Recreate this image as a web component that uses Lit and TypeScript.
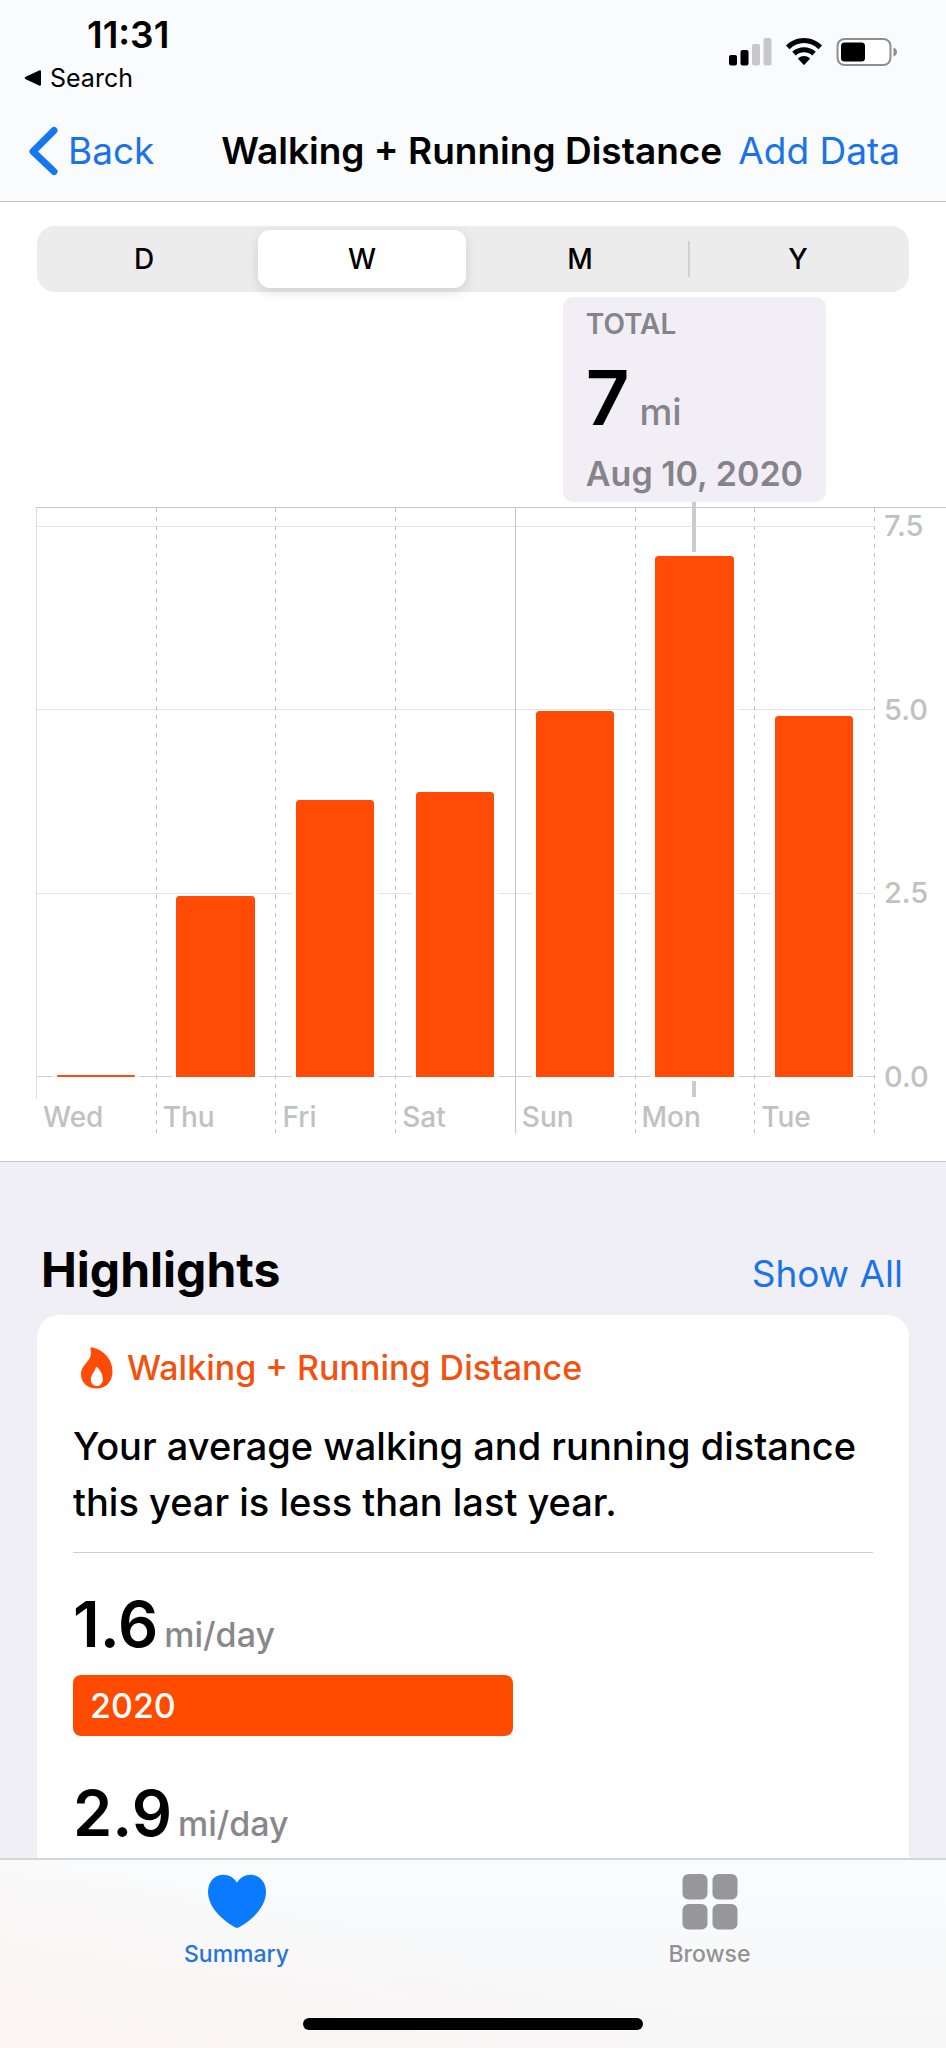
import { LitElement, html, css, svg } from "lit";
import { customElement, property, state } from "lit/decorators.js";
import { classMap } from "lit/directives/class-map.js";

interface DayValue {
  label: string;
  miles: number;
  weekStart?: boolean;
  date?: string;
}

const DAYS: DayValue[] = [
  { label: "Wed", miles: 0.03 },
  { label: "Thu", miles: 2.47 },
  { label: "Fri", miles: 3.77 },
  { label: "Sat", miles: 3.88 },
  { label: "Sun", miles: 4.98, weekStart: true },
  { label: "Mon", miles: 7.1, date: "Aug 10, 2020" },
  { label: "Tue", miles: 4.92 },
];

/* Miles represented by the full height of the plot. */
const CHART_MAX = 7.75;

@customElement("status-bar")
class StatusBar extends LitElement {
  static styles = css`
    :host {
      display: flex;
      justify-content: space-between;
      height: 100px;
      padding: 0 48px 0 24px;
      box-sizing: border-box;
    }
    .left {
      padding-top: 15px;
    }
    .time {
      padding-left: 63px;
      font-size: 37px;
      line-height: 40px;
      font-weight: 600;
    }
    .return {
      display: flex;
      align-items: center;
      gap: 9px;
      margin-top: 7px;
      font-size: 25px;
      line-height: 32px;
      color: #000;
      text-decoration: none;
    }
    .icons {
      display: flex;
      align-items: center;
      gap: 14px;
      height: 103px;
    }
    svg {
      display: block;
    }
  `;

  render() {
    return html`
      <div class="left">
        <div class="time">11:31</div>
        <a class="return" href="#search">
          <svg width="17" height="16" viewBox="0 0 17 16" aria-hidden="true">
            <path d="M1.2 7 15.6.3Q17 0 17 1.4V14.6Q17 16 15.6 15.7L1.2 9Q0 8 1.2 7Z" />
          </svg>
          Search
        </a>
      </div>
      <div class="icons">
        <svg width="43" height="28" viewBox="0 0 43 28" role="img" aria-label="Signal, two of four bars">
          <rect x="0" y="17" width="8" height="10.5" rx="2" />
          <rect x="11.5" y="12" width="8" height="15.5" rx="2" />
          <rect x="23" y="6" width="8" height="21.5" rx="2" fill="#c7c7c9" />
          <rect x="34.5" y="0" width="8" height="27.5" rx="2" fill="#c7c7c9" />
        </svg>
        <svg width="36" height="28" viewBox="0 0 36 28" role="img" aria-label="Wi-Fi">
          <path d="M0 7.6C5 2.7 11.300 0 18 0s13 2.700 18 7.600L32.500 11.200C28.400 7.300 23.300 5.100 18 5.100S7.600 7.300 3.500 11.200Z" />
          <path d="M6.200 13.800C9.500 10.800 13.600 9.200 18 9.200s8.500 1.600 11.800 4.600L26.200 17.400C23.900 15.300 21 14.200 18 14.200s-5.900 1.100-8.200 3.200Z" />
          <path d="M12.400 20.100c1.600-1.300 3.500-2.100 5.600-2.100s4 .8 5.600 2.100c.4.400.4.800 0 1.200L18.600 26.600c-.4.400-.8.400-1.200 0L12.400 21.300c-.4-.4-.4-.8 0-1.200Z" />
        </svg>
        <svg width="62" height="28" viewBox="0 0 62 28" role="img" aria-label="Battery, half full">
          <rect x="1.500" y="1" width="53" height="26" rx="7" fill="#fff" stroke="#8e8e90" stroke-width="2" />
          <rect x="5" y="4.500" width="24" height="19" rx="3.500" />
          <path d="M57.500 9.500c2 .6 3.500 2.200 3.500 4.500s-1.500 3.900-3.500 4.500Z" fill="#8e8e90" />
        </svg>
      </div>
    `;
  }
}

@customElement("nav-bar")
class NavBar extends LitElement {
  static styles = css`
    :host {
      display: flex;
      align-items: center;
      height: 102px;
      padding: 0 46px 0 28px;
      box-sizing: border-box;
      border-bottom: 1px solid #bcbcbe;
      white-space: nowrap;
    }
    .action {
      display: flex;
      align-items: center;
      gap: 10px;
      padding: 0;
      border: 0;
      background: none;
      font: inherit;
      font-size: 37px;
      line-height: 48px;
      color: #1a73e8;
    }
    .title {
      flex: 1;
      margin: 0;
      padding-right: 16px;
      text-align: right;
      font-size: 37px;
      line-height: 48px;
      font-weight: 600;
    }
  `;

  render() {
    return html`
      <button class="action" type="button">
        <svg width="30" height="50" viewBox="0 0 30 50" aria-hidden="true">
          <path d="M26 4.500 5 25.500 26 45.500" fill="none" stroke="#1478f2" stroke-width="7" stroke-linecap="round" stroke-linejoin="round" />
        </svg>
        Back
      </button>
      <h1 class="title">Walking + Running Distance</h1>
      <button class="action" type="button">Add Data</button>
    `;
  }
}

@customElement("range-picker")
class RangePicker extends LitElement {
  @state() private selected = "W";

  static styles = css`
    :host {
      display: grid;
      grid-template-columns: repeat(4, 1fr);
      height: 66px;
      margin: 0 37px;
      border-radius: 18px;
      background: #ececec;
    }
    .segment {
      margin: 4px 7px 4px 3px;
      padding: 0;
      border: 0;
      border-radius: 12px;
      background: none;
      font: inherit;
      font-size: 28px;
      font-weight: 500;
      color: #000;
    }
    .selected {
      background: #fff;
      box-shadow: 0 4px 12px rgba(0, 0, 0, 0.12);
    }
    .divided {
      margin: 4px 1px 4px -3px;
      border-radius: 0;
      background: linear-gradient(#d0d0d2, #d0d0d2) left center / 2px 36px no-repeat;
    }
  `;

  render() {
    const ranges = ["D", "W", "M", "Y"];
    const active = ranges.indexOf(this.selected);
    return ranges.map(
      (range, i) => html`
        <button
          type="button"
          class=${classMap({
            segment: true,
            selected: i === active,
            divided: i > 0 && i !== active && i - 1 !== active,
          })}
          aria-pressed=${i === active}
          @click=${() => (this.selected = range)}
        >
          ${range}
        </button>
      `
    );
  }
}

@customElement("distance-chart")
class DistanceChart extends LitElement {
  @property({ attribute: false }) days: DayValue[] = DAYS;

  static styles = css`
    :host {
      display: block;
      padding: 5px 0 27px 36px;
      --plot: 569px;
      --line: #e3e3e4;
      --dash: repeating-linear-gradient(#c3c3c5 0 4px, transparent 4px 9px);
    }
    .callouts,
    .plot {
      display: grid;
      grid-template-columns: repeat(7, minmax(0, 1fr));
    }
    .callouts {
      margin-right: 72px;
      padding-bottom: 5px;
    }
    .callout {
      grid-column: 6;
      justify-self: center;
      padding: 7px 23px 8px;
      border-radius: 10px;
      background: #f1eff5;
      color: #86848a;
      font-weight: 600;
      white-space: nowrap;
    }
    .caption {
      font-size: 28px;
      line-height: 40px;
    }
    .total {
      margin: 13px 0 17px;
      font-size: 37px;
      line-height: 40px;
      font-weight: 500;
    }
    .number {
      font-size: 76px;
      line-height: 80px;
      font-weight: 600;
      color: #000;
    }
    .date {
      font-size: 34px;
      line-height: 40px;
    }
    .chart {
      display: grid;
      grid-template-columns: minmax(0, 1fr) 72px;
      border-top: 1px solid #c6c6c8;
    }
    .plot {
      background:
        linear-gradient(var(--line), var(--line)) 0 18px / 100% 1px no-repeat,
        linear-gradient(var(--line), var(--line)) 0 201px / 100% 1px no-repeat,
        linear-gradient(var(--line), var(--line)) 0 385px / 100% 1px no-repeat,
        linear-gradient(#d0d0d2, #d0d0d2) 0 568px / 100% 1px no-repeat;
    }
    .day {
      background: var(--dash) left top / 1px 100% no-repeat;
    }
    .day:first-child {
      background: linear-gradient(#dcdcde, #dcdcde) left top / 1px 591px no-repeat;
    }
    .day.week-start {
      background: linear-gradient(#c9c9cb, #c9c9cb) left top / 1px 100% no-repeat;
    }
    .track {
      display: flex;
      flex-direction: column;
      align-items: center;
      justify-content: flex-end;
      height: var(--plot);
    }
    .bar {
      box-sizing: border-box;
      width: 72%;
      border: solid #fff;
      border-width: 0 4px;
      background: #ff4b05;
      background-clip: padding-box;
      border-radius: 7px 7px 0 0 / 3px 3px 0 0;
      flex: none;
    }
    .stem {
      flex: 1;
      width: 4px;
      margin: -6px 0 4px;
      background: #cbcbcf;
    }
    .foot {
      position: relative;
      height: 57px;
      padding: 20px 0 0 7px;
      box-sizing: border-box;
      font-size: 28px;
      line-height: 40px;
      font-weight: 500;
      color: #c1c1c2;
    }
    .tick {
      position: absolute;
      top: 4px;
      left: calc(50% - 2px);
      width: 4px;
      height: 16px;
      background: #cbcbcf;
    }
    .axis {
      padding-left: 10px;
      background: var(--dash) left top / 1px 100% no-repeat;
    }
    .values {
      display: flex;
      flex-direction: column;
      justify-content: space-between;
      height: 587px;
      font-size: 29px;
      line-height: 36px;
      font-weight: 500;
      color: #c1c1c2;
    }
  `;

  render() {
    const marked = this.days.find((d) => d.date);
    return html`
      <div class="callouts">
        <div class="callout">
          <div class="caption">TOTAL</div>
          <div class="total"><span class="number">${Math.round(marked?.miles ?? 0)}</span> mi</div>
          <div class="date">${marked?.date}</div>
        </div>
      </div>
      <div class="chart">
        <div class="plot">
          ${this.days.map(
            (d) => html`
              <div class=${classMap({ day: true, "week-start": !!d.weekStart })}>
                <div class="track">
                  ${d.date ? html`<div class="stem"></div>` : null}
                  <div class="bar" style="height:${(d.miles / CHART_MAX) * 100}%"></div>
                </div>
                <div class="foot">
                  ${d.date ? html`<span class="tick"></span>` : null}${d.label}
                </div>
              </div>
            `
          )}
        </div>
        <div class="axis">
          <div class="values">
            <span>7.5</span><span>5.0</span><span>2.5</span><span>0.0</span>
          </div>
        </div>
      </div>
    `;
  }
}

@customElement("highlight-card")
class HighlightCard extends LitElement {
  static styles = css`
    :host {
      display: block;
      padding: 31px 36px 48px;
      border-radius: 22px;
      background: #fff;
    }
    .topic {
      display: flex;
      align-items: center;
      gap: 14px;
      margin: 0;
      padding-left: 8px;
      font-size: 34px;
      line-height: 44px;
      font-weight: 500;
      color: #f4510f;
    }
    .summary {
      margin: 28px 0 22px;
      font-size: 38px;
      line-height: 56px;
      font-weight: 500;
    }
    .figures {
      display: grid;
      gap: 41px;
      padding-top: 35px;
      border-top: 1px solid #cfcfd1;
    }
    .figure {
      display: flex;
      align-items: baseline;
      gap: 6px;
      margin-bottom: 15px;
      font-size: 34px;
      line-height: 40px;
      font-weight: 500;
      color: #88888a;
    }
    .amount {
      font-size: 63px;
      line-height: 72px;
      font-weight: 600;
      color: #000;
    }
    .year {
      box-sizing: border-box;
      padding-left: 17px;
      border-radius: 8px;
      background: #ff4b00;
      color: #fff;
      font-size: 34px;
      line-height: 61px;
      font-weight: 500;
    }
  `;

  render() {
    const years = [
      { year: "2020", perDay: 1.6, width: 55 },
      { year: "2019", perDay: 2.9, width: 100 },
    ];
    return html`
      <h3 class="topic">
        <svg width="32" height="42" viewBox="0 0 32 42" aria-hidden="true">
          <path fill="#ff4b05" fill-rule="evenodd" d="M11.500.4C10 .1 9.200 1 9.600 2.500 10.600 7 9.800 10.400 6.400 14.500 3 18.600 0 21.800 0 27.200 0 35.400 6.600 41.500 15.600 41.500S31.500 35 31.500 24.500C31.500 12.800 23.500 3 11.500.4ZM14.700 20.500C13.900 25 9.800 27.500 9.800 32.500c0 3.600 2.400 6.500 6 6.500s6-2.900 6-6.800c0-5.100-2.600-9.300-5.700-12-.7-.5-1.200-.3-1.400.3Z" />
        </svg>
        Walking + Running Distance
      </h3>
      <p class="summary">Your average walking and running distance this year is less than last year.</p>
      <div class="figures">
        ${years.map(
          (y) => html`
            <div>
              <div class="figure"><span class="amount">${y.perDay}</span>mi/day</div>
              <div class="year" style="width:${y.width}%">${y.year}</div>
            </div>
          `
        )}
      </div>
    `;
  }
}

@customElement("tab-bar")
class TabBar extends LitElement {
  static styles = css`
    :host {
      display: block;
      flex: none;
      border-top: 2px solid #d4d5d8;
      background: linear-gradient(15deg, rgba(252, 242, 240, 0.7), rgba(250, 248, 248, 0) 50%),
        linear-gradient(#fafbfc, #f7f7f8);
    }
    .tabs {
      display: grid;
      grid-template-columns: repeat(2, 1fr);
      height: 158px;
    }
    .tab {
      display: flex;
      flex-direction: column;
      align-items: center;
      gap: 8px;
      padding-top: 14px;
      text-decoration: none;
      font-size: 23px;
      line-height: 32px;
      font-weight: 500;
      color: #929294;
    }
    .active {
      color: #2674dc;
    }
    .indicator {
      width: 36%;
      height: 12px;
      margin: 0 auto 18px;
      border-radius: 6px;
      background: #000;
    }
  `;

  render() {
    return html`
      <nav class="tabs">
        <a class="tab active" href="#summary" aria-current="page">
          <svg width="60" height="56" viewBox="0 0 60 56" aria-hidden="true">
            <path fill="#0a7aff" d="M30 8.800C27 3.700 22 .8 16.500.8 7.500.8 1 8 1 17.800 1 31 11.500 43.500 26.500 52.500 28 53.400 29 53.800 30 53.800s2-.4 3.500-1.300C48.500 43.500 59 31 59 17.800 59 8 52.500.8 43.500.8 38 .8 33 3.700 30 8.800Z" />
          </svg>
          Summary
        </a>
        <a class="tab" href="#browse">
          <svg width="56" height="56" viewBox="0 0 56 56" fill="#979799" aria-hidden="true">
            ${[0, 30].map((y) => [0, 30].map((x) => svg`<rect x=${x + 0.5} y=${y} width="25" height="25.500" rx="6" />`))}
          </svg>
          Browse
        </a>
      </nav>
      <div class="indicator"></div>
    `;
  }
}

@customElement("app-root")
class AppRoot extends LitElement {
  static styles = css`
    :host {
      display: flex;
      flex-direction: column;
      height: 100vh;
      overflow: hidden;
      background: #f1eff6;
      color: #000;
      font-family: Inter, "Liberation Sans", sans-serif;
    }
    .header {
      flex: none;
      background: #fafbfd;
    }
    .content {
      flex: 1;
      min-height: 0;
      overflow-y: auto;
      scrollbar-width: none;
    }
    .chart {
      padding-top: 24px;
      border-bottom: 1px solid #c9cbcb;
      background: #fff;
    }
    .highlights {
      padding: 78px 37px 40px;
    }
    .heading {
      display: flex;
      align-items: baseline;
      justify-content: space-between;
      padding: 0 6px 15px 4px;
    }
    .name {
      margin: 0;
      font-size: 48px;
      line-height: 60px;
      font-weight: 700;
    }
    .all {
      font-size: 37px;
      line-height: 48px;
      color: #1a73e8;
      text-decoration: none;
    }
  `;

  render() {
    return html`
      <header class="header">
        <status-bar></status-bar>
        <nav-bar></nav-bar>
      </header>
      <main class="content">
        <section class="chart">
          <range-picker></range-picker>
          <distance-chart></distance-chart>
        </section>
        <section class="highlights">
          <div class="heading">
            <h2 class="name">Highlights</h2>
            <a class="all" href="#highlights">Show All</a>
          </div>
          <highlight-card></highlight-card>
        </section>
      </main>
      <tab-bar></tab-bar>
    `;
  }
}
